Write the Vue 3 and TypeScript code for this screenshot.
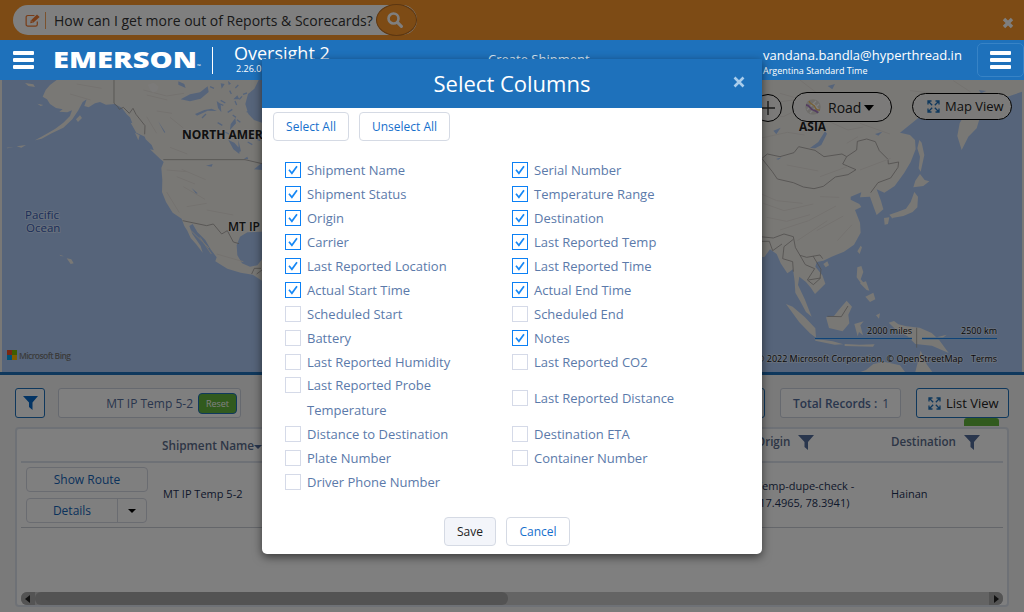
<script setup lang="ts">
import { ref } from 'vue'

interface Column { label: string; on: boolean }

const columns = ref<Column[]>([
  { label: 'Shipment Name', on: true },
  { label: 'Serial Number', on: true },
  { label: 'Shipment Status', on: true },
  { label: 'Temperature Range', on: true },
  { label: 'Origin', on: true },
  { label: 'Destination', on: true },
  { label: 'Carrier', on: true },
  { label: 'Last Reported Temp', on: true },
  { label: 'Last Reported Location', on: true },
  { label: 'Last Reported Time', on: true },
  { label: 'Actual Start Time', on: true },
  { label: 'Actual End Time', on: true },
  { label: 'Scheduled Start', on: false },
  { label: 'Scheduled End', on: false },
  { label: 'Battery', on: false },
  { label: 'Notes', on: true },
  { label: 'Last Reported Humidity', on: false },
  { label: 'Last Reported CO2', on: false },
  { label: 'Last Reported Probe Temperature', on: false },
  { label: 'Last Reported Distance', on: false },
  { label: 'Distance to Destination', on: false },
  { label: 'Destination ETA', on: false },
  { label: 'Plate Number', on: false },
  { label: 'Container Number', on: false },
  { label: 'Driver Phone Number', on: false },
])

function setAll(on: boolean): void {
  columns.value.forEach((c) => { c.on = on })
}
</script>

<template>
  <div class="page">
    <div class="banner">
      <div class="ask">
        <svg class="edit" viewBox="0 0 17 15" width="17" height="15">
          <path d="M13 8.500v3.200a1.800 1.800 0 0 1-1.800 1.800H3a1.800 1.800 0 0 1-1.800-1.800V4A1.800 1.800 0 0 1 3 2.200h7" fill="none" stroke="#f07a30" stroke-width="1.300" />
          <path d="M5.500 10.500l.6-3 6.600-6.300 2.800 2.600-6.800 6.200z" fill="#f07a30" />
          <path d="M6.800 8l1.500 1.400" stroke="#fff" stroke-width=".8" />
        </svg>
        <span class="bar"></span>
        <span class="question">How can I get more out of Reports &amp; Scorecards?</span>
        <span class="find">
          <svg viewBox="0 0 16 16" width="16" height="16"><circle cx="6.500" cy="6.500" r="5" fill="none" stroke="#fff" stroke-width="2.600" /><path d="M10.400 10.400l4 4" stroke="#fff" stroke-width="3" stroke-linecap="round" /></svg>
        </span>
      </div>
      <svg class="dismiss" viewBox="0 0 12 12" width="12" height="12"><path d="M2 2l8 8M10 2l-8 8" stroke="#fff" stroke-width="3.400" /></svg>
    </div>

    <header class="topbar">
      <div class="burger"><i></i><i></i><i></i></div>
      <svg class="logo" width="151" height="36" viewBox="0 0 151 36">
        <text x="0" y="26" textLength="144" lengthAdjust="spacingAndGlyphs" class="logo-text">EMERSON</text>
        <text x="144" y="26" class="tm">™</text>
      </svg>
      <span class="rule"></span>
      <div class="product"><b>Oversight 2</b><small>2.26.0</small></div>
      <span class="create">Create Shipment</span>
      <div class="user"><b>vandana.bandla@hyperthread.in</b><small>Argentina Standard Time</small></div>
      <div class="menu"><div class="burger"><i></i><i></i><i></i></div></div>
    </header>

    <div class="map">
      <svg class="chart" width="1020" height="292" viewBox="2 0 1020 292">
        <rect x="2" width="1020" height="292" fill="#acc9f5" />
        <g transform="scale(.33333)">
          <path class="land" d="M170 0L150 15 137 30 128 50 141 58 150 72 168 84 188 88 178 95 202 97 216 91 210 108 190 128 165 147 135 164 105 181 125 176 155 160 190 143 217 118 235 91 248 66 260 58 253 78 266 82 285 70 300 66 318 74 345 72 366 84 380 103 390 112 402 142 430 160 437 178 455 195 462 212 478 232 491 246 484 264 487 300 486 336 498 366 518 398 545 416 553 438 562 452 572 474 588 492 608 518 602 498 588 478 577 462 568 438 578 432 592 456 616 480 632 508 650 532 646 544 682 566 722 578 758 584 786 602 1000 640 1000 540 786 538 772 556 750 560 726 550 712 526 710 496 720 470 742 457 786 455 1000 455 1000 126 786 128 762 120 745 102 736 72 744 42 763 26 776 0Z" />
          <path class="land" d="M75 9l25 4 5 8-20-3zM112 71l18 4-8 3zM228 118l12-12 6 8-12 12zM178 524l14 5-10-1zM200 535l14 3 7 12-9 2zM20 203l22-2-20 4zM50 199l28-4-14 8zM392 128l17 30 26 12-8-35zM405 158l14 8-4 15zM450 208l34 32 10 4-18-30z" />
          <path class="lake" d="M535 4l18 8 4 12-22-10zM542 58l28-15 30-6 23-18 3 17-24 20-32 8zM585 102l28-12 22-4 16 7-28-1-32 15zM692 132l14-18 2 16-18 20zM685 180l18 8 16 18-1 16-18-14zM715 180l8 34-7 2zM700 58l12-12 6 12zM662 10l12 2-9 14zM618 257l20-5-3 8zM575 324l18 16-5 1zM474 123l22 34-3 1zM762 268l24-20v22zM732 236l10-6 3 8zM552 153l12 4-10 2zM650 63l12 9 2 25-10-13zM684 2l9 9-7 4z" />
          <path class="specks" d="M630 20l12 5m20 36l14 8m13-37l5 10m12-18l9-9m-10 48l5 12m19-32l12-4m-43 66l10 7m10-54l8-9m-73 79l14 8m8 20l12 6m24-43l10 8m22 59l14 8m-4-108l8-14m-78 25l14-9m-91 26l12-12m42-30l10 4m70 19l12 3m25 70l14-4m-19 14l9 3" />
          <path class="border" d="M342 0V70L353 80 358 88 370 82 388 100 399 85 408 103 435 137 434 163M490 239H735L765 246 786 251M548 422L620 437 640 432 665 462 682 452 700 486 717 491M755 582l8-17h20M770 582l16-12" />
          <path class="relief" d="M430 30l70 18 52-8M440 45l62 15M510 202l52 20M500 336l38 62M545 268l72 31M530 290l55 22M572 451l55 53M550 320l65 38M470 93l46 7M600 472l34 50M650 522l80 23M210 42l62 18M230 12l75 13M620 390l80 15M560 380l60-10M500 270l60 5M510 112l40 32M440 110l30 50" />
          <path d="M444 14l17-6 15 12-5 12-12 7-10-12z" fill="#fff" fill-opacity=".35" />
        </g>
        <g transform="translate(760 0) scale(.33333)">
          <path class="land" d="M-200 0H800V31L760 44 700 65 670 85 660 112 650 145 625 170 605 210 592 168 599 130 620 92 590 78 545 82 510 86 470 118 420 158 450 165 465 180 467 208 452 246 432 280 404 318 373 338 350 328 363 363 370 388 350 405 342 384 330 350 300 352 304 337 272 350 272 359 298 372 304 381 285 390 300 428 302 458 282 494 252 515 215 530 190 542 170 546 166 560 187 586 196 611 165 642 153 624 138 606 118 590 114 615 134 657 146 688 155 710 138 696 122 666 106 638 104 604 99 568 82 580 62 550 50 522 30 508 14 530-8 534-200 600Z" />
          <path class="land" d="M478 180L485 188 493 225 482 275 476 265 480 230 472 205ZM480 282L494 300 508 304 490 318 460 322 466 302ZM463 336L474 350 472 382 458 396 430 408 396 414 388 404 412 396 438 386 452 366ZM372 414l16-2-4 20-10 2zM394 404l12 2-10 10zM302 497l4 5-7 20-7-8zM190 552l12-8 5 12-10 6zM292 562l12-4 6 18-8 22 12 14-8 2-16-22zM316 650l24-12 6 20-16 8zM300 610l18-6 10 28-8-2zM78 672L98 680 134 711 166 745 168 773 150 760 118 727ZM164 776l54 8 32 9-26 1-58-12zM254 792l45 2 45-1-5 7-85-2zM198 712L222 708 238 688 260 662 276 680 265 704 268 730 248 754 207 744ZM283 732l28-8-10 12 8 30-12-10-4 13zM386 728l16-5 13 10 24 6 40 4 36 16 23 22 28 38-50-22-50-5-24-24-30-15zM530 772l30-8-16 13zM290 880L318 870 340 852 372 845 420 856 438 880ZM465 880L482 812 500 853 520 880ZM348 706l12-6-3 16z" />
          <path class="lake" d="M150 204l25-18 20-32 6 7-17 34-18 10zM40 152l22-9-13 20zM203 18l22-6-8 16zM345 162l22-7-12 12zM656 30l23 3-16 7zM48 237l17-5-10 7zM274 110l20 4-12 8z" />
          <path class="border" d="M0 240L22 222 60 230 102 218 116 200 165 211 192 230 246 222 260 230 290 210 292 184 320 177 346 185 358 212 384 238 385 252 416 246 414 262 392 294 354 308 332 338M6 236L37 275 52 297 100 308 130 321 162 326 190 319 226 291 264 284 288 269 248 252 260 230M0 470L40 474 72 462 100 470 106 502 120 526 140 532 180 525 188 536M100 478L72 500 68 536 98 545 100 575M120 526l16 28 28 12-22 34 18 14 20-18 3-28-24-40M145 600l37-6M0 484h28l10 28 28-20M202 709l42 1 20-32M470 743v60" />
          <path class="relief" d="M0 340l50 22 78 8M10 370l62 22 88-20M20 412l60 12 70-20M60 450l86-28 82-44M112 482l90-60M180 290l82-30M300 270l92-35M0 175l82-18 52 8M196 120l68 30 46-9M300 130l90 32M60 40l74 21 42-8M120 0l48 37M10 72l120-16M304 62l98 23M450 32l93 10M580 2l52 34M180 350l58 2M170 452l80-44M232 482l44-48M80 255l95 18M260 190l34-20M0 100L70 110 120 85" />
        </g>
        <g class="labels">
          <text x="182" y="59" class="continent">NORTH AMERICA</text>
          <text x="799" y="51" class="continent">ASIA</text>
          <text x="228" y="151" class="pin">MT IP</text>
          <text x="25" y="139" class="ocean">Pacific</text>
          <text x="26" y="152" class="ocean">Ocean</text>
        </g>
        <g>
          <path d="M7 270h5v5H7z" fill="#f25022" /><path d="M12 270h5v5h-5z" fill="#7fba00" /><path d="M7 275h5v5H7z" fill="#00a4ef" /><path d="M12 275h5v5h-5z" fill="#ffb900" />
          <text x="19" y="279" textLength="52" class="bing">Microsoft Bing</text>
        </g>
        <g class="scale">
          <path d="M815 258.500h97M922 258.500h75" stroke="#fff" stroke-width="3" stroke-opacity=".5" />
          <path d="M815 258.500h97M922 258.500h75" stroke="#1e86f0" stroke-width="1.600" />
          <text x="867" y="254" textLength="45">2000 miles</text>
          <text x="961" y="254" textLength="36">2500 km</text>
          <text x="757" y="282" textLength="206">© 2022 Microsoft Corporation, © OpenStreetMap</text>
          <text x="971" y="282" textLength="26">Terms</text>
        </g>
      </svg>
      <div class="mapctl">
        <span class="plus"><svg width="16" height="16" viewBox="0 0 16 16"><path d="M8 1v14M1 8h14" stroke="#333" stroke-width="1.400" /></svg></span>
        <span class="pill road">
          <svg width="16" height="16" viewBox="0 0 16 16"><circle cx="8" cy="8" r="7.700" fill="#dedbd5" /><path d="M2 11L11 2M5 14L14 5M8 4l6 7" stroke="#fff" stroke-width="1.200" /><path d="M4 2c1 4 5 3 6 6s2 3 5 3" fill="none" stroke="#f1c064" stroke-width="1.300" /><path d="M1 6c4 0 4 4 7 5s4 1 5 3" fill="none" stroke="#a77bc0" stroke-width="1.800" /></svg>
          Road<i class="caret"></i>
        </span>
        <span class="pill view">
          <svg class="expand" width="13" height="13" viewBox="0 0 13 13"><path d="M1 4.500V1h3.500M8.500 1H12v3.500M12 8.500V12H8.500M4.500 12H1V8.500M1.500 1.500l3.700 3.700M11.500 1.500L7.800 5.200M11.500 11.500L7.800 7.800M1.500 11.500l3.700-3.700" /></svg>
          Map View
        </span>
      </div>
    </div>

    <div class="toolbar">
      <span class="tool funnel"><svg width="15" height="14" viewBox="0 0 15 14"><path d="M0 0h15L9.500 6.500V14L6 11V6.500z" fill="#0668c8" /></svg></span>
      <span class="chip">MT IP Temp 5-2 <b>Reset</b></span>
      <span class="tool more"></span>
      <span class="total"><b>Total Records :</b> 1</span>
      <span class="tool list">
        <svg class="expand" width="13" height="13" viewBox="0 0 13 13"><path d="M1 4.500V1h3.500M8.500 1H12v3.500M12 8.500V12H8.500M4.500 12H1V8.500M1.500 1.500l3.700 3.700M11.500 1.500L7.800 5.200M11.500 11.500L7.800 7.800M1.500 11.500l3.700-3.700" /></svg>
        List View
      </span>
      <span class="tab"></span>
    </div>

    <div class="card">
      <div class="row head">
        <span class="c1"></span>
        <span class="c2">Shipment Name<i class="caret small"></i></span>
        <span class="c3">Origin <svg width="16" height="15" viewBox="0 0 16 15"><path d="M0 0h16L10 7v8L6.500 12V7z" fill="#536c9a" /></svg></span>
        <span class="c4">Destination <svg width="16" height="15" viewBox="0 0 16 15"><path d="M0 0h16L10 7v8L6.500 12V7z" fill="#536c9a" /></svg></span>
      </div>
      <div class="row body">
        <div class="c1 actions">
          <span class="act">Show Route</span>
          <span class="split"><span>Details</span><span><i class="caret small"></i></span></span>
        </div>
        <span class="c2">MT IP Temp 5-2</span>
        <span class="c3">Temp-dupe-check -<br>(17.4965, 78.3941)</span>
        <span class="c4">Hainan</span>
      </div>
      <div class="scroll">
        <span class="arrow left"></span>
        <span class="thumb"></span>
        <span class="arrow right"></span>
      </div>
    </div>

    <div class="shade"></div>

    <section class="modal">
      <div class="title">
        <h1>Select Columns</h1>
        <svg width="12" height="12" viewBox="0 0 12 12"><path d="M1.500 1.500l9 9M10.500 1.500l-9 9" stroke="#a9cdec" stroke-width="2.600" /></svg>
      </div>
      <div class="bulk">
        <button class="btn sel" @click="setAll(true)">Select All</button>
        <button class="btn unsel" @click="setAll(false)">Unselect All</button>
      </div>
      <div class="grid">
        <label v-for="c in columns" :key="c.label" class="opt" :class="{ tall: c.label.endsWith('Probe Temperature') }" @click="c.on = !c.on">
          <span class="box" :class="{ on: c.on }">
            <svg v-if="c.on" width="14" height="14" viewBox="0 0 14 14"><path d="M3 6.800L5.900 10.300 11 3.200" fill="none" stroke="#1788f5" stroke-width="1.700" /></svg>
          </span>
          <span class="name">{{ c.label }}</span>
        </label>
      </div>
      <div class="foot">
        <button class="btn save">Save</button>
        <button class="btn cancel">Cancel</button>
      </div>
    </section>
  </div>
</template>

<style>
html, body { overflow: hidden; }
</style>

<style scoped>
* { box-sizing: border-box; }
.page { position: relative; width: 1024px; height: 612px; overflow: hidden; background: #f4f4f4; font-family: "Open Sans", "Noto Sans", sans-serif; font-size: 13px; }
.banner { height: 40px; background: #fb962a; display: flex; align-items: center; justify-content: space-between; padding: 0 10px 0 13px; }
.ask { width: 404px; height: 30px; border-radius: 15px; background: #fff; display: flex; align-items: center; padding-left: 12px; }
.bar { width: 1px; height: 17px; background: #f6a45c; margin: 0 8px 0 4px; }
.question { font-size: 14px; color: #333; white-space: nowrap; flex: none; width: 322px; }
.find { flex: none; width: 41px; height: 32px; border-radius: 50%; background: #fb962a; border: 1px solid #b96d22; display: flex; align-items: center; justify-content: center; padding-right: 3px; }
.dismiss { margin-top: 5px; }

.topbar { position: relative; z-index: 3; height: 40px; background: #1e71bb; color: #fff; display: flex; align-items: center; padding-left: 13px; }
.burger { width: 21px; display: flex; flex-direction: column; gap: 3px; flex: none; }
.burger i { height: 4px; background: #fff; border-radius: 1px; }
.logo { margin-left: 19px; flex: none; }
.logo-text { font-size: 23.500px; font-weight: 800; fill: #fff; }
.tm { font-size: 5px; fill: #fff; }
.rule { width: 1px; height: 27px; background: #fff; margin: 0 21px 0 8px; }
.product { width: 119px; margin-top: -2px; }
.product b { display: block; font-weight: 400; font-size: 18px; line-height: 20px; white-space: nowrap; }
.product small { display: block; font-size: 9px; line-height: 12px; padding-left: 2px; }
.create { margin-left: 135px; width: 275px; font-size: 13px; color: #d7e6f4; margin-top: -2px; }
.user { width: 214px; flex: none; padding-top: 3px; }
.user b { display: block; font-weight: 400; font-size: 13px; line-height: 17px; white-space: nowrap; }
.user small { display: block; font-size: 9px; line-height: 13px; }
.menu { width: 47px; height: 34px; border: 1px solid #3783c6; border-radius: 5px; padding-left: 12px; display: flex; align-items: center; flex: none; }

.map { position: relative; height: 295px; border-bottom: 3px solid #1e71bb; background: #f3f1ed; }
.chart { display: block; margin: 0 2px; }
.land { fill: #f3f0eb; }
.lake { fill: #acc9f5; }
.specks { stroke: #acc9f5; stroke-width: 4; fill: none; }
.border { fill: none; stroke: #a5a19d; stroke-width: 2.500; }
.relief { fill: none; stroke: #e8e4de; stroke-width: 3; }
.labels text { paint-order: stroke; stroke: #fff; stroke-opacity: .4; stroke-width: 2px; }
.continent { font-size: 12px; font-weight: 700; fill: #222; }
.pin { font-size: 12px; font-weight: 600; fill: #222; }
.ocean { font-size: 11.500px; fill: #385cb4; }
.bing { font-size: 8.500px; font-weight: 600; fill: #777; }
.scale text { font-size: 9px; fill: #111; paint-order: stroke; stroke: #fff; stroke-width: 1.500px; stroke-opacity: .5; }
.mapctl { position: absolute; left: 754px; top: 12px; display: flex; align-items: flex-start; }
.plus { width: 28px; height: 28px; border: 1px solid #000; border-radius: 50%; background: #f6f5f3; margin-top: 2px; display: flex; align-items: center; justify-content: center; }
.pill { background: #f6f5f3; border: 1px solid #000; border-radius: 15px; display: flex; align-items: center; font-size: 14px; color: #222; white-space: nowrap; }
.road { margin-left: 10px; width: 100px; height: 30px; padding-left: 12px; gap: 7px; }
.view { margin-left: 20px; margin-top: 1px; width: 100px; height: 27px; padding: 0 0 1px 14px; gap: 5px; font-size: 13px; }
.expand { fill: none; stroke: #1e71bb; stroke-width: 1.300; flex: none; }
.caret { width: 0; height: 0; border: 5px solid transparent; border-top: 6px solid #000; border-bottom: 0; margin-left: -4px; margin-top: 1px; }
.caret.small { border-width: 4px 4px 0; margin-top: 0; }

.toolbar { position: relative; height: 52px; padding: 13px 15px 0; display: flex; color: #536c9a; }
.toolbar > span { height: 30px; background: #fff; border: 1px solid #ccd2df; border-radius: 3px; display: flex; align-items: center; }
.toolbar > .tool { border-color: #1e71bb; }
.funnel { width: 30px; justify-content: center; }
.chip { width: 183px; margin-left: 13px; justify-content: flex-end; padding-right: 3px; gap: 5px; font-size: 12px; }
.chip b { width: 39px; height: 21px; background: #63b53d; color: #fff; border: 1px solid #1e71bb; border-radius: 4px; font-size: 9px; font-weight: 400; display: flex; align-items: center; justify-content: center; }
.more { width: 120px; margin-left: 404px; }
.total { width: 121px; margin-left: 15px; padding-left: 12px; gap: 5px; white-space: nowrap; font-size: 12px; }
.total b { font-weight: 600; font-size: 11.900px; }
.list { width: 93px; margin-left: 15px; padding-left: 11px; gap: 5px; color: #222; white-space: nowrap; }
.toolbar > .tab { position: absolute; left: 964px; top: 43px; width: 35px; height: 8px; background: #63b53d; border: 0; border-radius: 3px 3px 0 0; }

.card { margin: 0 15px 0 15px; height: 180px; border: 2px solid #dce3ec; border-radius: 4px; background: #fff; padding: 0 4px; }
.row { display: flex; align-items: center; }
.row > * { flex: none; }
.head { height: 34px; border-bottom: 2px solid #dce3ec; font-size: 12px; font-weight: 600; color: #5b6c8c; }
.head > * { display: flex; align-items: center; }
.head svg { margin-left: 8px; margin-top: 2px; }
.head .c2 { padding-bottom: 1px; margin-left: -1px; margin-right: 1px; font-size: 11.800px; }
.head .c3, .head .c4 { padding-bottom: 7px; font-size: 11.600px; }
.body { height: 65px; border-bottom: 1px solid #c8ccd4; font-size: 11px; color: #1d3156; line-height: 17px; }
.body > span { padding-bottom: 3px; }
.c1 { width: 142px; }
.c2 { width: 593px; }
.c3 { width: 135px; white-space: nowrap; }
.head .c2 .caret { border-top-color: #536c9a; margin-left: 0; margin-top: 4px; }
.actions { padding-left: 5px; padding-bottom: 1px; display: flex; flex-direction: column; gap: 6px; color: #1464b8; font-size: 12px; }
.act { width: 122px; height: 25px; border: 1px solid #d5d8e2; border-radius: 4px; display: flex; align-items: center; justify-content: center; }
.split { width: 121px; height: 25px; border: 1px solid #d5d8e2; border-radius: 4px; display: flex; }
.split > span { flex: 1; display: flex; align-items: center; justify-content: center; }
.split > span + span { flex: none; width: 29px; border-left: 1px solid #d5d8e2; }
.split .caret { margin-left: 0; margin-top: 2px; }
.scroll { margin-top: 64px; width: 982px; height: 13px; background: #c9c9c9; border-radius: 6px; overflow: hidden; display: flex; align-items: center; }
.arrow { width: 14px; height: 13px; background: #a9a9a9; display: flex; align-items: center; justify-content: center; }
.arrow::after { content: ""; border: 4px solid transparent; }
.arrow.left::after { border-right: 5px solid #222; border-left: 0; margin-right: 2px; }
.arrow.right::after { border-left: 5px solid #222; border-right: 0; }
.arrow.right { margin-left: auto; }
.thumb { width: 473px; height: 13px; background: #a7a7a7; border-radius: 6px; }

.shade { position: absolute; inset: 0; z-index: 2; background: rgba(0, 0, 0, .5); }
.modal { position: absolute; z-index: 4; left: 262px; top: 59px; width: 500px; height: 495px; background: #fff; border-radius: 0 0 5px 5px; box-shadow: 0 3px 10px rgba(0, 0, 0, .55); overflow: hidden; }
.title { height: 49px; background: #1e71bb; color: #fff; display: flex; align-items: center; padding: 0 17px 2px; }
.title h1 { flex: 1; margin: 0; padding-left: 12px; text-align: center; font-size: 22px; font-weight: 400; }
.title svg { margin-top: -2px; }
.bulk { display: flex; gap: 10px; padding: 4px 11px 0; height: 50px; }
.btn { height: 29px; padding: 0; border: 1px solid #d5dae4; border-radius: 4px; background: #fff; color: #1670cc; font-family: inherit; font-size: 12px; }
.sel { width: 76px; }
.unsel { width: 91px; }
.grid { display: grid; grid-template-columns: 227px 227px; grid-template-rows: repeat(9, 24px) 48px repeat(3, 24px); padding-left: 23px; }
.opt { display: flex; align-items: center; color: #5b7aaa; font-size: 13px; line-height: 24.700px; }
.box { flex: none; width: 16px; height: 16px; border: 1px solid #d5dae8; }
.box.on { border-color: #0b80f5; }
.box svg { display: block; }
.name { margin-left: 6px; max-width: 175px; }
.tall .box { align-self: flex-start; margin-top: 3px; }
.opt:not(.tall) .name { white-space: nowrap; }
.foot { display: flex; justify-content: center; gap: 10px; padding: 23px 10px 0 0; }
.save { width: 52px; background: #f3f5fa; color: #222; }
.cancel { width: 64px; }
</style>
